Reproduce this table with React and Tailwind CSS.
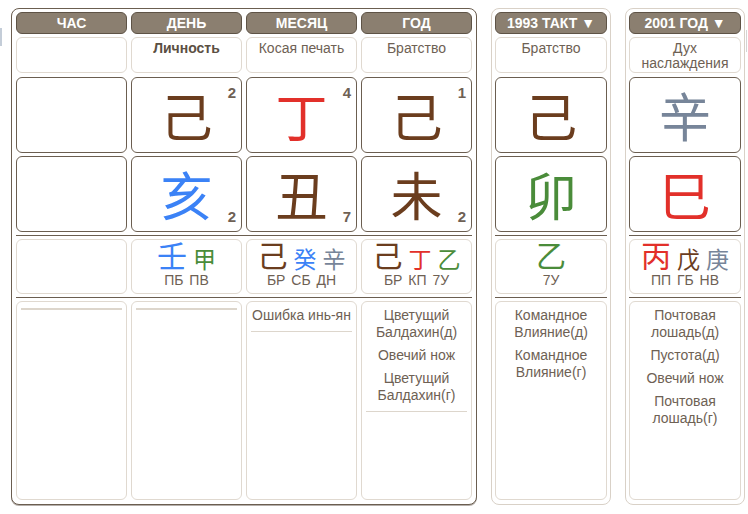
import React from 'react';

const tone = {
  earth: 'text-[#6b3d1e]',
  fire: 'text-[#e2302a]',
  water: 'text-[#3b82f6]',
  metal: 'text-[#778599]',
  wood: 'text-[#4a8c3a]',
};

const mainPillars = [
  { title: 'ЧАС', label: '', stem: null, branch: null, hidden: [], codes: '', stars: [] },
  {
    title: 'ДЕНЬ', label: 'Личность', bold: true,
    stem: { ch: '己', el: 'earth', n: 2 }, branch: { ch: '亥', el: 'water', n: 2 },
    hidden: [['壬', 'water'], ['甲', 'wood']], codes: 'ПБ ПВ', stars: [],
  },
  {
    title: 'МЕСЯЦ', label: 'Косая печать',
    stem: { ch: '丁', el: 'fire', n: 4 }, branch: { ch: '丑', el: 'earth', n: 7 },
    hidden: [['己', 'earth'], ['癸', 'water'], ['辛', 'metal']], codes: 'БР СБ ДН',
    stars: ['Ошибка инь-ян'],
  },
  {
    title: 'ГОД', label: 'Братство',
    stem: { ch: '己', el: 'earth', n: 1 }, branch: { ch: '未', el: 'earth', n: 2 },
    hidden: [['己', 'earth'], ['丁', 'fire'], ['乙', 'wood']], codes: 'БР КП 7У',
    stars: ['Цветущий Балдахин(д)', 'Овечий нож', 'Цветущий Балдахин(г)'],
  },
];

const luckPillar = {
  title: '1993 ТАКТ ▼', label: 'Братство',
  stem: { ch: '己', el: 'earth' }, branch: { ch: '卯', el: 'wood' },
  hidden: [['乙', 'wood']], codes: '7У',
  stars: ['Командное Влияние(д)', 'Командное Влияние(г)'],
};

const yearPillar = {
  title: '2001 ГОД ▼', label: 'Дух наслаждения',
  stem: { ch: '辛', el: 'metal' }, branch: { ch: '巳', el: 'fire' },
  hidden: [['丙', 'fire'], ['戊', 'earth'], ['庚', 'metal']], codes: 'ПП ГБ НВ',
  stars: ['Почтовая лошадь(д)', 'Пустота(д)', 'Овечий нож', 'Почтовая лошадь(г)'],
};

const cjk = "font-['Noto_Sans_CJK_SC',sans-serif]";

const CharBox = ({ item, top }) => (
  <div className="relative h-[76px] bg-white border border-[#6b5e50] rounded-[6px] flex items-center justify-center">
    {item && (
      <span className={`${cjk} ${tone[item.el]} text-[52px] leading-none`}>{item.ch}</span>
    )}
    {item?.n && (
      <span
        className={`absolute right-[5px] text-[15px] font-bold leading-none text-[#6e6154] ${
          top ? 'top-[7px]' : 'bottom-[7px]'
        }`}
      >
        {item.n}
      </span>
    )}
  </div>
);

const Divider = () => <div className="mt-[3px] h-px bg-[#6b5e50]" />;

const Panel = ({ pillars, side }) => {
  const cols = side ? 'grid grid-cols-[112px]' : 'grid grid-cols-[repeat(4,111px)] gap-x-[4px]';
  return (
    <div
      className={`bg-white border rounded-[8px] pt-[3px] pb-[4px] ${
        side
          ? 'border-[#d9d1c7] px-[3px]'
          : 'border-[#6b5e50] px-[4px] shadow-[0_1px_0_rgba(90,78,66,0.45)]'
      }`}
    >
      <div className={cols}>
        {pillars.map((p) => (
          <div
            key={p.title}
            className="h-[22px] bg-[#8b7f70] border border-[#5e5346] rounded-[6px] flex items-center justify-center text-white font-bold text-[14px] leading-none"
          >
            {p.title}
          </div>
        ))}
      </div>

      <div className={`${cols} mt-[3px]`}>
        {pillars.map((p) => (
          <div
            key={p.title}
            className={`h-[36px] border border-[#e0d9d0] rounded-[6px] pt-[3px] px-[2px] text-center text-[14px] leading-[15px] ${
              p.bold ? 'font-bold text-[#5b4f43]' : 'text-[#6e6154]'
            }`}
          >
            {p.label}
          </div>
        ))}
      </div>

      <div className={`${cols} mt-[4px]`}>
        {pillars.map((p) => (
          <CharBox key={p.title} item={p.stem} top />
        ))}
      </div>

      <div className={`${cols} mt-[3px]`}>
        {pillars.map((p) => (
          <CharBox key={p.title} item={p.branch} />
        ))}
      </div>

      <Divider />

      <div className={`${cols} mt-[3px]`}>
        {pillars.map((p) => (
          <div
            key={p.title}
            className="h-[55px] border border-[#e0d9d0] rounded-[6px] flex flex-col items-center"
          >
            <div className="flex items-end gap-[6px] h-[29px]">
              {p.hidden.map(([ch, el], i) => (
                <span
                  key={i}
                  className={`${cjk} ${tone[el]} ${
                    i === 0 ? 'text-[30px] leading-[29px]' : 'text-[23px] leading-[22px]'
                  }`}
                >
                  {ch}
                </span>
              ))}
            </div>
            <div className="mt-[3px] text-[14px] leading-[16px] text-[#6e6154] whitespace-pre [word-spacing:2px]">
              {p.codes}
            </div>
          </div>
        ))}
      </div>

      <Divider />

      <div className={`${cols} mt-[3px]`}>
        {pillars.map((p) => (
          <div key={p.title} className="h-[199px] border border-[#e0d9d0] rounded-[6px] pt-[2px]">
            <div
              className={
                side
                  ? ''
                  : `mx-[4px] pb-[4px] border-[#ddd6cc] ${p.stars.length ? 'border-b' : 'border-b-2'}`
              }
            >
              {p.stars.map((s, i) => (
                <div key={i} className="py-[3px] text-center text-[14px] leading-[17px] text-[#6e6154]">
                  {s}
                </div>
              ))}
            </div>
          </div>
        ))}
      </div>
    </div>
  );
};

export default function App() {
  return (
    <div className="w-[748px] h-[514px] bg-white flex items-start pt-[8px] overflow-hidden font-['Liberation_Sans',sans-serif]">
      <div className="w-[2px] h-[18px] mt-[20px] bg-[#c4cdd8] shrink-0" />
      <div className="ml-[9px] shrink-0">
        <Panel pillars={mainPillars} />
      </div>
      <div className="ml-[14px] w-[120px] shrink-0">
        <Panel pillars={[luckPillar]} side />
      </div>
      <div className="ml-[14px] w-[120px] shrink-0">
        <Panel pillars={[yearPillar]} side />
      </div>
      <div className="ml-[1px] w-px h-[22px] mt-[22px] bg-[#d4d4d4] shrink-0" />
    </div>
  );
}
